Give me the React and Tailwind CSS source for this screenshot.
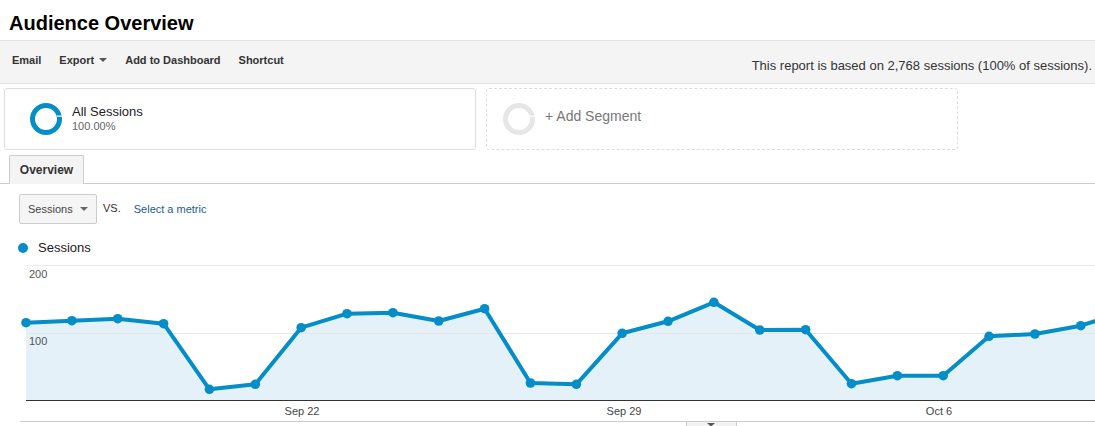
import { useState } from 'react';

const BLUE = '#058dc7';

// sessions per day, read off the plot (y px in chart coords)
const points = [
  322.7, 320.7, 318.7, 323.7, 389.3, 384.3, 327.7, 313.7, 312.7, 321, 308.7, 383, 384.3,
  333.3, 321.3, 302.3, 330, 329.7, 383.7, 375.7, 375.7, 336.3, 334, 325.7, 311,
].map((y, i) => [26 + i * 45.86, y - 258]);

const Ring = ({ color, gap }) => (
  <svg width="36" height="36" viewBox="0 0 36 36">
    <circle cx="18" cy="18" r="13.5" fill="none" stroke={color} strokeWidth="5" />
    {gap && <rect x="29" y="14.5" width="6" height="1.2" fill="#fff" />}
  </svg>
);

const Chart = () => {
  const line = points.map(([x, y]) => `${x},${y}`).join(' ');
  const area = `26,142 ${line} ${points[points.length - 1][0]},142`;
  return (
    <svg width="1095" height="168" viewBox="0 0 1095 168" className="block" style={{ fontFamily: '"Liberation Sans", Arial, sans-serif' }}>
      <line x1="26" y1="7.5" x2="1095" y2="7.5" stroke="#eaeaea" />
      <polygon points={area} fill="#e4f1f8" />
      <line x1="26" y1="75.5" x2="1095" y2="75.5" stroke="#e6e6e6" />
      <line x1="26" y1="142.5" x2="1095" y2="142.5" stroke="#333" />
      <text x="29" y="20" fontSize="11" fill="#555">200</text>
      <text x="29" y="87" fontSize="11" fill="#555">100</text>
      <polyline points={line} fill="none" stroke={BLUE} strokeWidth="4" strokeLinejoin="round" />
      {points.map(([x, y], i) => (
        <circle key={i} cx={x} cy={y} r="4.8" fill={BLUE} />
      ))}
      <text x="302" y="157" fontSize="11" fill="#444" textAnchor="middle">Sep 22</text>
      <text x="624" y="157" fontSize="11" fill="#444" textAnchor="middle">Sep 29</text>
      <text x="939" y="157" fontSize="11" fill="#444" textAnchor="middle">Oct 6</text>
      <line x1="20" y1="163.5" x2="1095" y2="163.5" stroke="#ccc" />
      <rect x="686.5" y="163.5" width="50" height="6" fill="#f2f2f2" stroke="#ccc" />
      <polygon points="707,165 715,165 711,168.5" fill="#555" />
    </svg>
  );
};

const App = () => {
  const [metric] = useState('Sessions');

  return (
    <div className="w-[1095px] h-[426px] overflow-hidden bg-white text-[#333]" style={{ fontFamily: '"Liberation Sans", Arial, sans-serif' }}>
      <div className="h-[40px] pl-[9px] pt-[11px] text-[20px] font-bold leading-[24px] text-black">Audience Overview</div>

      <div className="h-[44px] border-y border-[#e2e2e2] bg-[#f4f4f4] flex justify-between">
        <div className="flex items-center h-[38px] pl-[12px] text-[11px] font-bold text-[#333] gap-[18px]">
          <span>Email</span>
          <span className="flex items-center gap-[5px]">
            Export
            <span className="w-0 h-0 border-x-[4px] border-x-transparent border-t-[4px] border-t-[#555]" />
          </span>
          <span>Add to Dashboard</span>
          <span>Shortcut</span>
        </div>
        <div className="pt-[17px] pr-[3px] text-[13px] text-[#333] leading-[16px]">
          This report is based on 2,768 sessions (100% of sessions).
        </div>
      </div>

      <div className="flex mt-[4px] pl-[4px] gap-[10px]">
        <div className="w-[472px] h-[62px] border border-[#ddd] rounded-[3px] flex items-center pl-[23px] gap-[8px]">
          <Ring color={BLUE} gap />
          <div className="-mt-[2px]">
            <div className="text-[13px] leading-[16px] text-[#222]">All Sessions</div>
            <div className="text-[11px] leading-[13px] text-[#666]">100.00%</div>
          </div>
        </div>
        <div className="w-[472px] h-[62px] border border-dashed border-[#ddd] rounded-[3px] flex items-center pl-[14px] gap-[8px]">
          <Ring color="#e6e6e6" gap />
          <span className="text-[14px] text-[#777] -mt-[6px]">+ Add Segment</span>
        </div>
      </div>

      <div className="mt-[5px] h-[29px] border-b border-[#ccc] pl-[9px] flex">
        <div className="w-[75px] h-[29px] border border-b-0 border-[#ccc] bg-[#f4f4f4] rounded-t-[2px] text-[12px] font-bold text-[#333] flex items-center justify-center">
          Overview
        </div>
      </div>

      <div className="mt-[10px] ml-[19px] flex items-center">
        <div className="w-[78px] h-[30px] border border-[#ccc] rounded-[2px] bg-[#f5f5f5] flex items-center justify-between px-[8px] text-[11px] text-[#444]">
          <span>{metric}</span>
          <span className="w-0 h-0 border-x-[4px] border-x-transparent border-t-[4px] border-t-[#666]" />
        </div>
        <span className="ml-[6px] -mt-[2px] text-[11px] text-[#333]">VS.</span>
        <span className="ml-[13px] text-[11px] text-[#1d5d92]">Select a metric</span>
      </div>

      <div className="mt-[14px] h-[20px] pl-[18px] flex items-center gap-[10px]">
        <span className="w-[10px] h-[10px] rounded-full bg-[#058dc7]" />
        <span className="text-[13px] text-[#222]">Sessions</span>
      </div>

      <Chart />
    </div>
  );
};

export default App;
